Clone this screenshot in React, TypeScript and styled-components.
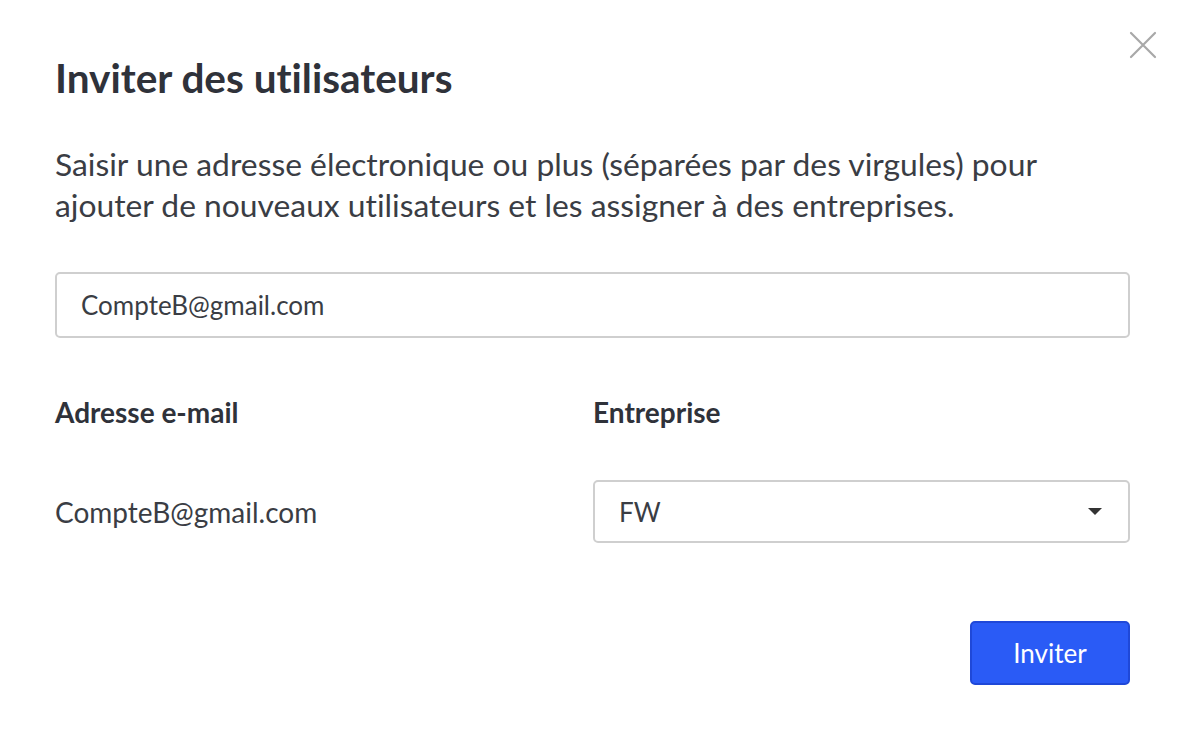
import React from 'react';
import styled, { createGlobalStyle } from 'styled-components';

const GlobalStyle = createGlobalStyle`
  html, body {
    margin: 0;
    padding: 0;
    background: #ffffff;
    font-family: 'Lato', 'Open Sans', sans-serif;
    font-variant-ligatures: none;
    color: #2f323a;
  }
`;

const Dialog = styled.div`
  position: relative;
  box-sizing: border-box;
  width: 1184px;
  height: 742px;
  padding: 52px 54px 0 55px;
  display: flex;
  flex-direction: column;
`;

const CloseButton = styled.button`
  position: absolute;
  top: 30px;
  right: 26px;
  width: 30px;
  height: 30px;
  padding: 0;
  border: none;
  background: none;
  cursor: pointer;
`;

const Title = styled.h1`
  margin: 0;
  font-size: 40.5px;
  font-weight: 700;
  line-height: 52px;
  color: #2f323a;
`;

const Description = styled.p`
  margin: 40px 0 0;
  font-size: 31.8px;
  line-height: 41px;
  color: #3a3d44;
`;

const EmailInput = styled.input`
  box-sizing: border-box;
  margin-top: 46px;
  width: 100%;
  height: 66px;
  padding: 0 24px;
  border: 2px solid #cfcfcf;
  border-radius: 5px;
  font-family: inherit;
  font-variant-ligatures: none;
  font-size: 26px;
  color: #3a3d44;
  outline: none;
`;

const Table = styled.div`
  display: grid;
  grid-template-columns: 538px 1fr;
  margin-top: 57px;
  align-items: center;
`;

const HeaderCell = styled.div`
  font-size: 28px;
  font-weight: 700;
  line-height: 34px;
  color: #2f323a;
`;

const Cell = styled.div`
  margin-top: 51px;
  font-size: 28px;
  color: #3a3d44;
`;

const Select = styled.div`
  box-sizing: border-box;
  margin-top: 51px;
  height: 63px;
  display: flex;
  align-items: center;
  justify-content: space-between;
  padding: 0 26px 0 24px;
  border: 2px solid #cfcfcf;
  border-radius: 5px;
  font-size: 26px;
  color: #3a3d44;
`;

const Caret = styled.span`
  width: 0;
  height: 0;
  border-left: 7px solid transparent;
  border-right: 7px solid transparent;
  border-top: 7px solid #333;
`;

const Footer = styled.div`
  display: flex;
  justify-content: flex-end;
  margin-top: 78px;
`;

const PrimaryButton = styled.button`
  box-sizing: border-box;
  width: 160px;
  height: 64px;
  border: 2px solid #1f48d8;
  border-radius: 5px;
  background: #2a5bf6;
  color: #ffffff;
  font-family: inherit;
  font-size: 26px;
  cursor: pointer;
`;

export default function App() {
  return (
    <>
      <GlobalStyle />
      <Dialog>
        <CloseButton aria-label="Fermer">
          <svg width="30" height="30" viewBox="0 0 30 30">
            <path d="M3 3 L27 27 M27 3 L3 27" stroke="#a8a8a8" strokeWidth="2.2" strokeLinecap="round" />
          </svg>
        </CloseButton>
        <Title>Inviter des utilisateurs</Title>
        <Description>
          Saisir une adresse électronique ou plus (séparées par des virgules) pour ajouter de nouveaux utilisateurs et les assigner à des entreprises.
        </Description>
        <EmailInput defaultValue="CompteB@gmail.com" />
        <Table>
          <HeaderCell>Adresse e-mail</HeaderCell>
          <HeaderCell>Entreprise</HeaderCell>
          <Cell>CompteB@gmail.com</Cell>
          <Select>
            <span>FW</span>
            <Caret />
          </Select>
        </Table>
        <Footer>
          <PrimaryButton>Inviter</PrimaryButton>
        </Footer>
      </Dialog>
    </>
  );
}
